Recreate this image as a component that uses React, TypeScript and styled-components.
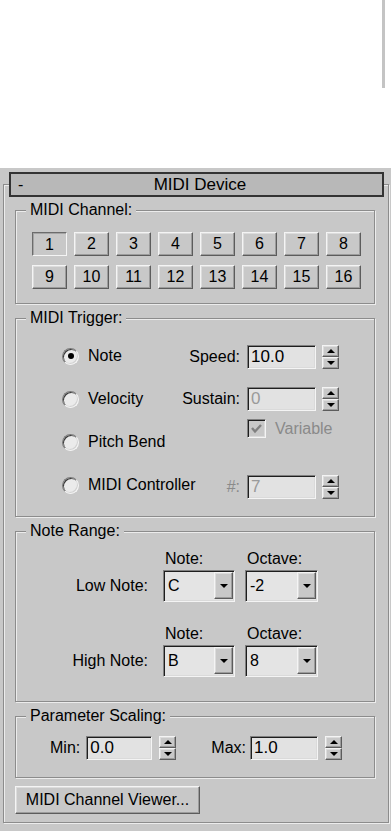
import React from "react";
import styled, { createGlobalStyle, css } from "styled-components";

const PANEL = "#c8c8c8";

const GlobalStyle = createGlobalStyle`
  html, body {
    margin: 0;
    padding: 0;
    background: #fff;
  }
  body {
    font-family: "Liberation Sans", Arial, sans-serif;
    font-size: 16px;
    color: #000;
  }
  * {
    box-sizing: border-box;
  }
`;

const raised = css`
  border: 1px solid;
  border-color: #f4f4f4 #5c5c5c #5c5c5c #f4f4f4;
  box-shadow: inset -1px -1px 0 #9c9c9c, inset 1px 1px 0 #dcdcdc;
`;

const sunken = css`
  border: 1px solid;
  border-color: #808080 #f4f4f4 #f4f4f4 #808080;
  box-shadow: inset 1px 1px 0 #1e1e1e, inset -1px -1px 0 #dadada;
`;

const etched = css`
  border: 1px solid #8c8c8c;
  box-shadow: inset 1px 1px 0 #ececec, 1px 1px 0 #ececec;
`;

const Page = styled.div`
  width: 391px;
  height: 831px;
  display: flex;
  flex-direction: column;
  overflow: hidden;
`;

const TopArea = styled.div`
  flex: none;
  height: 168px;
  display: flex;
  justify-content: flex-end;
  padding-right: 6px;
  background: #fff;
`;

const EdgeLine = styled.div`
  width: 3px;
  height: 88px;
  background: #c4c4c4;
`;

const Panel = styled.div`
  flex: 1;
  background: ${PANEL};
  padding: 16px 2px 0 3px;
`;

const Frame = styled.div`
  ${etched};
  width: 386px;
`;

const TitleBar = styled.div`
  display: grid;
  grid-template-columns: 1fr auto 1fr;
  align-items: center;
  width: 375px;
  height: 25px;
  margin: -13px 0 0 5px;
  padding-left: 7px;
  border: 2px solid #333;
  background: #b8b8b8;
  font-size: 17px;
  line-height: 20px;
`;

const Collapse = styled.span`
  font-size: 16px;
`;

const Body = styled.div`
  display: flex;
  flex-direction: column;
  margin-top: 13px;
  padding: 0 13px 8px 11px;
`;

const Groups = styled.div`
  display: flex;
  flex-direction: column;
  gap: 14px;
`;

const Group = styled.div<{ $pb: number }>`
  ${etched};
  padding-bottom: ${(p) => p.$pb}px;
`;

const GroupTitle = styled.div`
  width: fit-content;
  margin: -10px 0 0 10px;
  padding: 0 4px;
  background: ${PANEL};
  line-height: 18px;
  white-space: nowrap;
`;

const ChannelGrid = styled.div`
  display: grid;
  grid-template-columns: repeat(8, 35px);
  grid-auto-rows: 24px;
  column-gap: 7px;
  row-gap: 9px;
  margin-top: 13px;
  padding-left: 16px;
`;

const ChannelButton = styled.div<{ $pressed?: boolean }>`
  display: flex;
  align-items: center;
  justify-content: center;
  background: ${PANEL};
  font-size: 16px;
  ${(p) =>
    p.$pressed
      ? css`
          border: 1px solid;
          border-color: #6c6c6c #f4f4f4 #f4f4f4 #6c6c6c;
          box-shadow: inset 1px 1px 0 #a4a4a4;
          padding-top: 1px;
        `
      : raised};
`;

const TriggerBody = styled.div`
  display: flex;
  justify-content: space-between;
  margin-top: 18px;
  padding: 0 35px 0 46px;
`;

const RadioCol = styled.div`
  flex: none;
  display: flex;
  flex-direction: column;
  gap: 21px;
  width: 108px;
`;

const RadioRow = styled.div`
  display: flex;
  align-items: center;
  gap: 9px;
  height: 22px;
  white-space: nowrap;
`;

const Radio = styled.span<{ $on?: boolean }>`
  flex: none;
  display: flex;
  align-items: center;
  justify-content: center;
  width: 17px;
  height: 17px;
  border-radius: 50%;
  border: 1px solid;
  border-color: #7c7c7c #f4f4f4 #f4f4f4 #7c7c7c;
  box-shadow: inset 1px 1px 0 #3a3a3a, inset -1px -1px 0 #d2d2d2;
  background: #ebebeb;

  &::after {
    content: "";
    width: 6px;
    height: 6px;
    border-radius: 50%;
    background: ${(p) => (p.$on ? "#000" : "transparent")};
  }
`;

const FieldCol = styled.div`
  flex: none;
  display: flex;
  flex-direction: column;
  width: 169px;
`;

const FieldRow = styled.div<{ $mt?: number }>`
  display: flex;
  align-items: center;
  height: 24px;
  margin-top: ${(p) => p.$mt ?? 0}px;
`;

const FieldLabel = styled.span<{ $dim?: boolean }>`
  width: 70px;
  margin-right: 7px;
  text-align: right;
  color: ${(p) => (p.$dim ? "#8a8a8a" : "#000")};
  white-space: nowrap;
`;

const Edit = styled.div<{ $w: number; $dim?: boolean }>`
  ${sunken};
  width: ${(p) => p.$w}px;
  height: 24px;
  padding-left: 3px;
  background: #e2e2e2;
  font-size: 17px;
  line-height: 21px;
  color: ${(p) => (p.$dim ? "#9a9a9a" : "#000")};
`;

const SpinBox = styled.div<{ $ml: number }>`
  display: flex;
  flex-direction: column;
  width: 17px;
  height: 24px;
  margin-left: ${(p) => p.$ml}px;
`;

const SpinHalf = styled.div`
  ${raised};
  flex: 1;
  display: flex;
  align-items: center;
  justify-content: center;
  background: ${PANEL};
`;

const ArrowUp = styled.span`
  width: 0;
  height: 0;
  border-left: 4px solid transparent;
  border-right: 4px solid transparent;
  border-bottom: 4px solid #000;
`;

const ArrowDown = styled.span`
  width: 0;
  height: 0;
  border-left: 4px solid transparent;
  border-right: 4px solid transparent;
  border-top: 4px solid #000;
`;

const CheckRow = styled.div`
  display: flex;
  align-items: center;
  gap: 9px;
  height: 19px;
  margin-top: 8px;
  padding-left: 77px;
`;

const CheckBox = styled.span`
  ${sunken};
  flex: none;
  display: flex;
  align-items: center;
  justify-content: center;
  width: 19px;
  height: 19px;
  background: ${PANEL};
`;

const DimText = styled.span`
  color: #8a8a8a;
`;

const NoteBlock = styled.div<{ $mt: number }>`
  display: flex;
  align-items: flex-end;
  margin-top: ${(p) => p.$mt}px;
`;

const RowLabel = styled.span`
  width: 132px;
  margin-right: 15px;
  text-align: right;
  line-height: 32px;
`;

const ComboCol = styled.div<{ $w: number; $ml?: number }>`
  display: flex;
  flex-direction: column;
  width: ${(p) => p.$w}px;
  margin-left: ${(p) => p.$ml ?? 0}px;
`;

const ComboCaption = styled.span`
  padding-left: 2px;
  margin-bottom: 2px;
  line-height: 18px;
`;

const Combo = styled.div`
  ${sunken};
  display: flex;
  justify-content: space-between;
  height: 32px;
  padding: 1px 1px 2px 1px;
  background: #e4e4e4;
`;

const ComboText = styled.span`
  padding-left: 3px;
  line-height: 27px;
`;

const ComboButton = styled.div`
  ${raised};
  display: flex;
  align-items: center;
  justify-content: center;
  width: 19px;
  background: ${PANEL};
`;

const ParamRow = styled.div`
  display: flex;
  justify-content: space-between;
  margin-top: 11px;
  padding: 0 32px 0 34px;
`;

const ParamField = styled.div`
  display: flex;
  align-items: center;
  height: 24px;
`;

const ParamLabel = styled.span<{ $mr: number }>`
  margin-right: ${(p) => p.$mr}px;
`;

const ViewerButton = styled.div`
  ${raised};
  display: flex;
  align-items: center;
  justify-content: center;
  width: 185px;
  height: 28px;
  margin-top: 8px;
  background: ${PANEL};
  white-space: nowrap;
`;

const Spinner = ({ ml }: { ml: number }) => (
  <SpinBox $ml={ml}>
    <SpinHalf>
      <ArrowUp />
    </SpinHalf>
    <SpinHalf>
      <ArrowDown />
    </SpinHalf>
  </SpinBox>
);

const Dropdown = ({ value }: { value: string }) => (
  <Combo>
    <ComboText>{value}</ComboText>
    <ComboButton>
      <ArrowDown />
    </ComboButton>
  </Combo>
);

const channels = Array.from({ length: 16 }, (_, i) => i + 1);
const triggers = ["Note", "Velocity", "Pitch Bend", "MIDI Controller"];

const noteRows = [
  { label: "Low Note:", note: "C", octave: "-2", mt: 10 },
  { label: "High Note:", note: "B", octave: "8", mt: 23 },
];

export default function App() {
  return (
    <>
      <GlobalStyle />
      <Page>
        <TopArea>
          <EdgeLine />
        </TopArea>
        <Panel>
          <Frame>
            <TitleBar>
              <Collapse>-</Collapse>
              <span>MIDI Device</span>
              <span />
            </TitleBar>
            <Body>
              <Groups>
                <Group $pb={14}>
                  <GroupTitle>MIDI Channel:</GroupTitle>
                  <ChannelGrid>
                    {channels.map((n) => (
                      <ChannelButton key={n} $pressed={n === 1}>
                        {n}
                      </ChannelButton>
                    ))}
                  </ChannelGrid>
                </Group>

                <Group $pb={17}>
                  <GroupTitle>MIDI Trigger:</GroupTitle>
                  <TriggerBody>
                    <RadioCol>
                      {triggers.map((t, i) => (
                        <RadioRow key={t}>
                          <Radio $on={i === 0} />
                          <span>{t}</span>
                        </RadioRow>
                      ))}
                    </RadioCol>
                    <FieldCol>
                      <FieldRow>
                        <FieldLabel>Speed:</FieldLabel>
                        <Edit $w={69}>10.0</Edit>
                        <Spinner ml={6} />
                      </FieldRow>
                      <FieldRow $mt={18}>
                        <FieldLabel>Sustain:</FieldLabel>
                        <Edit $w={69} $dim>
                          0
                        </Edit>
                        <Spinner ml={6} />
                      </FieldRow>
                      <CheckRow>
                        <CheckBox>
                          <svg width="13" height="13" viewBox="0 0 13 13">
                            <polyline
                              points="2,6 5,9.5 11,3"
                              fill="none"
                              stroke="#808080"
                              strokeWidth="2.4"
                            />
                          </svg>
                        </CheckBox>
                        <DimText>Variable</DimText>
                      </CheckRow>
                      <FieldRow $mt={37}>
                        <FieldLabel $dim>#:</FieldLabel>
                        <Edit $w={69} $dim>
                          7
                        </Edit>
                        <Spinner ml={6} />
                      </FieldRow>
                    </FieldCol>
                  </TriggerBody>
                </Group>

                <Group $pb={24}>
                  <GroupTitle>Note Range:</GroupTitle>
                  {noteRows.map((r) => (
                    <NoteBlock key={r.label} $mt={r.mt}>
                      <RowLabel>{r.label}</RowLabel>
                      <ComboCol $w={72}>
                        <ComboCaption>Note:</ComboCaption>
                        <Dropdown value={r.note} />
                      </ComboCol>
                      <ComboCol $w={73} $ml={10}>
                        <ComboCaption>Octave:</ComboCaption>
                        <Dropdown value={r.octave} />
                      </ComboCol>
                    </NoteBlock>
                  ))}
                </Group>

                <Group $pb={17}>
                  <GroupTitle>Parameter Scaling:</GroupTitle>
                  <ParamRow>
                    <ParamField>
                      <ParamLabel $mr={6}>Min:</ParamLabel>
                      <Edit $w={66}>0.0</Edit>
                      <Spinner ml={7} />
                    </ParamField>
                    <ParamField>
                      <ParamLabel $mr={4}>Max:</ParamLabel>
                      <Edit $w={68}>1.0</Edit>
                      <Spinner ml={7} />
                    </ParamField>
                  </ParamRow>
                </Group>
              </Groups>
              <ViewerButton>MIDI Channel Viewer...</ViewerButton>
            </Body>
          </Frame>
        </Panel>
      </Page>
    </>
  );
}
